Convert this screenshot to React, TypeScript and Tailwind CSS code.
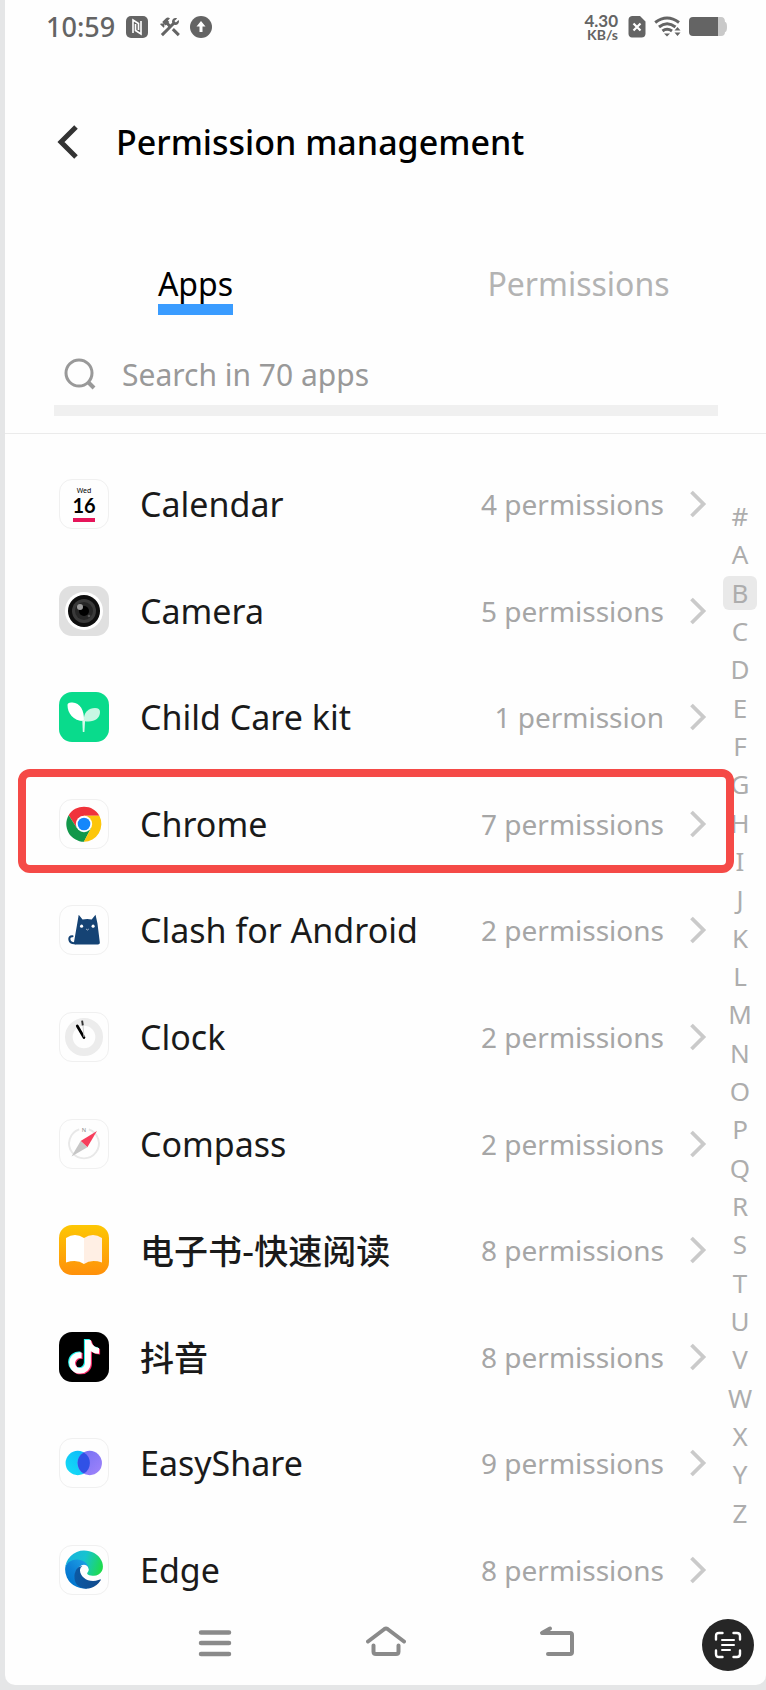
import type { ReactNode } from "react";
import { FaTiktok } from "react-icons/fa";
import { MdConstruction } from "react-icons/md";

function CalendarIcon() {
  return (
    <div className="flex h-full flex-col items-center pt-1.5 text-black">
      <span className="text-[7px] leading-[9px]">Wed</span>
      <span className="font-['Lato'] text-[20px] leading-[20px] font-bold">16</span>
      <span className="mt-[3px] h-1 w-[22px] bg-[#e6155a]" />
    </div>
  );
}

function CameraIcon() {
  return (
    <svg viewBox="0 0 50 50" className="size-full">
      <rect width="50" height="50" fill="#e0e0e0" />
      <circle cx="25" cy="25" r="19" fill="#fff" />
      <circle cx="25" cy="25" r="16" fill="#0e0e0e" />
      <circle cx="25" cy="25" r="12" fill="#3a3a3a" />
      <circle cx="25" cy="25" r="9" fill="#262626" />
      <circle cx="25" cy="25" r="5" fill="#000" />
      <circle cx="21" cy="21" r="3" fill="#9a9a9a" />
      <circle cx="30" cy="30" r="1.3" fill="#555" />
    </svg>
  );
}

function SproutIcon() {
  return (
    <svg viewBox="0 0 50 50" className="size-full">
      <rect width="50" height="50" fill="#09db8c" />
      <path d="M25 29C24 20 30 16 36 16q5 0 5 4c0 7-7 11-16 9z" fill="#c8f7e4" />
      <path d="M25 29C14 29 8.500 21 8.500 13q0-3 5-2.500C21 11 25.500 18 25 29z" fill="#fff" />
      <path d="M23.300 28h2.800l-.7 12h-1.600z" fill="#d9faec" />
    </svg>
  );
}

function ChromeIcon() {
  return (
    <svg viewBox="-25 -25 50 50" className="size-full">
      <path d="M-16 -9.200A18.500 18.500 0 0 1 16 -8.500L0 -8.500 -7.400 4.200Z" fill="#f0333b" />
      <path d="M-16 -9.200A18.500 18.500 0 0 0 0 18.500L7.400 4.200 -7.400 4.200Z" fill="#12974a" />
      <path d="M16 -8.500A18.500 18.500 0 0 1 -.2 18.500L7.400 4.200 0 -8.500Z" fill="#fcc60b" />
      <circle r="8.500" fill="#fff" />
      <circle r="6.600" fill="#1587fb" />
    </svg>
  );
}

function CatIcon() {
  return (
    <svg viewBox="0 0 50 50" className="size-full">
      <path d="M19.500 9l4 5q5-1 9.500 0l4-5 2 9 2.500 20q.2 2-2 2H16q-1.800 0-1.500-2L18 18z" fill="#154374" />
      <path d="M13 31.500c-5-.5-4.500 8 3 7.300" fill="none" stroke="#154374" strokeWidth="2.200" strokeLinecap="round" />
      <circle cx="22.500" cy="21" r="1.600" fill="#fff" />
      <circle cx="34.500" cy="21" r="1.600" fill="#fff" />
      <path d="M27.200 24l1.400 1 1.400-1" fill="none" stroke="#b9c7d6" strokeWidth="1" />
    </svg>
  );
}

function ClockIcon() {
  return (
    <svg viewBox="0 0 50 50" className="size-full">
      <circle cx="25" cy="25" r="15.800" fill="none" stroke="#ececec" strokeWidth="8" />
      <path d="M18 13.500L25 25.500" stroke="#000" strokeWidth="2.800" strokeLinecap="round" />
      <path d="M23 8l.8 5" stroke="#333" strokeWidth="2" />
      <path d="M24 13l1 12" stroke="#ccc" strokeWidth="1" />
    </svg>
  );
}

function CompassIcon() {
  return (
    <svg viewBox="0 0 50 50" className="size-full">
      <path d="M30 9.800A15.500 15.500 0 1 1 20 9.800" fill="none" stroke="#e8e8e8" strokeWidth="2" />
      <text x="25" y="12" fontSize="6" textAnchor="middle" fill="#888">
        N
      </text>
      <path d="M38.500 11.500L21.500 22l7 6.500z" fill="#f73e5c" />
      <path d="M12 38l9.500-16 7 6.500z" fill="#c6c6c6" />
    </svg>
  );
}

function BookIcon() {
  return (
    <svg viewBox="0 0 50 50" className="size-full">
      <defs>
        <linearGradient id="book-bg" x1="0" y1="0" x2="0" y2="1">
          <stop offset="0" stopColor="#fdc704" />
          <stop offset="1" stopColor="#ff900a" />
        </linearGradient>
      </defs>
      <rect width="50" height="50" fill="url(#book-bg)" />
      <path d="M7 13q9-6 18 0v26q-7-5-18-1.500z" fill="#fff" />
      <path d="M43 13q-9-6-18 0v26q7-5 18-1.500z" fill="#ffefe4" />
    </svg>
  );
}

function DouyinIcon() {
  return (
    <svg viewBox="0 0 50 50" className="size-full">
      <rect width="50" height="50" fill="#000" />
      <FaTiktok x="7" y="7" size={34} color="#25f4ee" />
      <FaTiktok x="9.200" y="8.600" size={34} color="#fe2c6d" />
      <FaTiktok x="8.100" y="7.800" size={34} color="#fff" />
    </svg>
  );
}

function EasyShareIcon() {
  return (
    <svg viewBox="0 0 50 50" className="size-full">
      <defs>
        <linearGradient id="share-left" x1="0" y1="1" x2="1" y2="0">
          <stop offset="0" stopColor="#16dff5" />
          <stop offset="1" stopColor="#0bb4fb" />
        </linearGradient>
        <linearGradient id="share-right" x1="0" y1="0" x2="1" y2="1">
          <stop offset="0" stopColor="#706ef2" />
          <stop offset="1" stopColor="#a184fb" />
        </linearGradient>
      </defs>
      <circle cx="18.500" cy="25" r="12.700" fill="url(#share-left)" />
      <circle cx="31" cy="25" r="12.700" fill="url(#share-right)" />
      <path d="M24.750 14a12.700 12.700 0 0 1 0 22 12.700 12.700 0 0 1 0-22z" fill="#3051e6" />
    </svg>
  );
}

function EdgeIcon() {
  return (
    <svg viewBox="0 0 50 50" className="size-full">
      <defs>
        <linearGradient id="edge-dark" x1="63" y1="177" x2="241" y2="177" gradientUnits="userSpaceOnUse">
          <stop offset="0" stopColor="#0c59a4" />
          <stop offset="1" stopColor="#114a8b" />
        </linearGradient>
        <linearGradient id="edge-mid" x1="157" y1="100" x2="46" y2="221" gradientUnits="userSpaceOnUse">
          <stop offset="0" stopColor="#1b9de2" />
          <stop offset=".6" stopColor="#0d7fd6" />
          <stop offset="1" stopColor="#0278cf" />
        </linearGradient>
        <linearGradient id="edge-top" x1="20" y1="60" x2="245" y2="130" gradientUnits="userSpaceOnUse">
          <stop offset="0" stopColor="#18b5dc" />
          <stop offset=".45" stopColor="#16c3d0" />
          <stop offset="1" stopColor="#1fdc4c" />
        </linearGradient>
      </defs>
      <g transform="translate(5.300 4.700) scale(.1540)">
        <path
          fill="url(#edge-mid)"
          d="M105.700 241.400a79.200 79.200 0 0 1-22.700-21.300 80.700 80.700 0 0 1 29.500-120c3.200-1.500 8.500-4.100 15.600-4a32.400 32.400 0 0 1 25.700 13 31.900 31.900 0 0 1 6.300 18.700c0-.2 24.500-79.600-80-79.600-43.900 0-80 41.700-80 78.200a130.200 130.200 0 0 0 12.100 56 128 128 0 0 0 156.400 67 75.500 75.500 0 0 1-62.800-8z"
        />
        <path
          fill="url(#edge-dark)"
          d="M235.700 195.500a94 94 0 0 1-10.600 4.700 101.900 101.900 0 0 1-35.900 6.400c-47.300 0-88.500-32.500-88.500-74.300a31.500 31.500 0 0 1 16.400-27.300c-42.800 1.800-53.800 46.400-53.800 72.500 0 74 68.100 81.400 82.800 81.400 7.900 0 19.800-2.300 27-4.600l1.300-.4a128.300 128.300 0 0 0 66.600-52.800 4 4 0 0 0-5.300-5.600z"
        />
        <path
          fill="url(#edge-top)"
          d="M152.300 148.900c-.8 1-3.300 2.500-3.300 5.700 0 2.600 1.700 5.100 4.700 7.200 14.400 10 41.500 8.700 41.600 8.700a59.600 59.600 0 0 0 30.300-8.300 61.400 61.400 0 0 0 30.400-52.900c.3-22.400-8-37.300-11.300-43.900C223.500 23.900 177.700 0 128 0A128 128 0 0 0 0 126.200c.5-36.500 36.800-66 80-66 3.500 0 23.500.3 42 10 16.300 8.600 24.900 19 30.800 29.200 6.200 10.700 7.300 24.100 7.300 29.500s-2.700 13.300-7.800 20z"
        />
      </g>
    </svg>
  );
}

type AppEntry = {
  name: string;
  count: number;
  icon: ReactNode;
  filled?: boolean;
  chinese?: boolean;
  marked?: boolean;
};

const apps: AppEntry[] = [
  { name: "Calendar", count: 4, icon: <CalendarIcon /> },
  { name: "Camera", count: 5, icon: <CameraIcon />, filled: true },
  { name: "Child Care kit", count: 1, icon: <SproutIcon />, filled: true },
  { name: "Chrome", count: 7, icon: <ChromeIcon />, marked: true },
  { name: "Clash for Android", count: 2, icon: <CatIcon /> },
  { name: "Clock", count: 2, icon: <ClockIcon /> },
  { name: "Compass", count: 2, icon: <CompassIcon /> },
  { name: "电子书-快速阅读", count: 8, icon: <BookIcon />, filled: true, chinese: true },
  { name: "抖音", count: 8, icon: <DouyinIcon />, filled: true, chinese: true },
  { name: "EasyShare", count: 9, icon: <EasyShareIcon /> },
  { name: "Edge", count: 8, icon: <EdgeIcon /> },
];

const letters = "#ABCDEFGHIJKLMNOPQRSTUVWXYZ".split("");

function StatusBar() {
  return (
    <div className="flex h-[54px] items-center justify-between pr-[39px] pl-[41px] text-[#646464]">
      <div className="flex items-center">
        <time className="w-20 text-[27px] leading-8 font-medium">10:59</time>
        <svg viewBox="0 0 22 22" className="size-[22px]">
          <rect width="22" height="22" rx="5" fill="currentColor" />
          <path
            d="M7 17V4l5.500 3.500V14M9.500 8v6.500L15 18V5"
            fill="none"
            stroke="#fff"
            strokeWidth="1.600"
          />
        </svg>
        <MdConstruction className="ml-2.5 size-6" />
        <svg viewBox="0 0 22 22" className="ml-2 size-[22px]">
          <circle cx="11" cy="11" r="11" fill="currentColor" />
          <path d="M11 5l4.500 5.500h-3V16h-3v-5.500h-3z" fill="#fff" />
        </svg>
      </div>
      <div className="flex items-center">
        <div className="flex flex-col items-end font-['Lato'] font-bold">
          <span className="text-[17px] leading-[14px]">4.30</span>
          <span className="text-[14px] leading-[13px]">KB/s</span>
        </div>
        <svg viewBox="0 0 18 22" className="ml-2.5 h-[22px] w-[18px]">
          <path d="M4 0h8l5.500 5.500V18a4 4 0 0 1-4 3.500H4A4 4 0 0 1 .5 18V4A4 4 0 0 1 4 0z" fill="currentColor" />
          <path d="M5.500 7.500l7 7m0-7l-7 7" stroke="#fff" strokeWidth="2.200" />
        </svg>
        <svg viewBox="0 0 27 22" className="ml-2 h-[22px] w-[27px]" fill="none" stroke="currentColor" strokeWidth="3">
          <path d="M1.200 6.500Q13 -2.500 25 6.500" />
          <path d="M5 11q8-6.500 16.500 0" />
          <path d="M8.500 15q4.500-3.500 9.500 0" />
          <path d="M10 17.500h6L13 20.500z" fill="currentColor" stroke="none" />
          <path d="M23.500 11l3 3.500h-6zM23.500 20l3-3.500h-6z" fill="currentColor" stroke="none" />
        </svg>
        <svg viewBox="0 0 38 20" className="ml-2 h-5 w-[38px]">
          <path d="M26 0h6q4 0 4 5 2 0 2 5t-2 5q0 4-4 4h-6z" fill="#c9c9c9" />
          <path d="M4 0h25v19H4a4 4 0 0 1-4-4V4a4 4 0 0 1 4-4z" fill="currentColor" />
        </svg>
      </div>
    </div>
  );
}

function AppRow({ app }: { app: AppEntry }) {
  return (
    <li className="relative flex">
      <a href="#" className="flex flex-1 items-center pr-[7px] pl-[54px]">
        <span
          className={
            app.filled
              ? "size-[50px] shrink-0 overflow-hidden rounded-[13px]"
              : "size-[50px] shrink-0 overflow-hidden rounded-[13px] border border-[#f0f0f0]"
          }
        >
          {app.icon}
        </span>
        <span
          className={
            app.chinese
              ? "ml-[31px] flex-1 font-['Noto_Sans_CJK_SC',sans-serif] text-[34px] leading-10 font-medium text-[#1a1a1a]"
              : "ml-[31px] flex-1 text-[34px] leading-10 text-[#1a1a1a]"
          }
        >
          {app.name}
        </span>
        <span className="text-[28px] leading-9 text-[#a6a6a6]">
          {app.count} {app.count === 1 ? "permission" : "permissions"}
        </span>
        <svg viewBox="0 0 18 28" className="ml-[25px] h-7 w-[18px]" fill="none" stroke="#cacaca" strokeWidth="3.800">
          <path d="M2.500 2l12 12-12 12" />
        </svg>
      </a>
      {app.marked && (
        <span className="pointer-events-none absolute -top-0.5 -right-5 bottom-1 left-[13px] z-10 rounded-xl border-8 border-[#f54a47]" />
      )}
    </li>
  );
}

export default function App() {
  return (
    <div className="min-h-screen bg-[#e5e6e7] pb-1 pl-[5px] font-['Noto_Sans','Noto_Sans_CJK_SC',sans-serif]">
      <div className="relative rounded-b-[10px] bg-[#fefefe]">
        <StatusBar />

        <header className="flex h-44 items-center pl-[51px]">
          <button type="button" aria-label="Back">
            <svg viewBox="0 0 24 36" className="h-9 w-6" fill="none" stroke="#333" strokeWidth="5">
              <path d="M20 3L5 18l15 15" />
            </svg>
          </button>
          <h1 className="ml-9 text-[34px] leading-10 font-medium text-black">Permission management</h1>
        </header>

        <div role="tablist" className="grid grid-cols-2 gap-2 pt-9 pl-[3px] text-[32px] leading-9">
          <button type="button" role="tab" aria-selected="true" className="flex flex-col items-center text-black">
            <span className="flex flex-col gap-0.5">
              Apps
              <span className="h-[11px] bg-[#3a9cff]" />
            </span>
          </button>
          <button type="button" role="tab" aria-selected="false" className="flex flex-col items-center text-[#b3b3b3]">
            Permissions
          </button>
        </div>

        <label className="mt-7 mr-12 ml-[49px] flex h-[73px] items-center border-b-[11px] border-[#f0f0f0] pl-2.5">
          <svg viewBox="0 0 32 32" className="size-8" fill="none" stroke="#999" strokeWidth="3">
            <circle cx="15" cy="15" r="13" />
            <path d="M24 24l6 6" strokeWidth="4" />
          </svg>
          <input
            type="text"
            aria-label="Search apps"
            placeholder="Search in 70 apps"
            className="ml-[26px] h-10 min-w-0 flex-1 bg-transparent text-[30px] outline-none placeholder:text-[#999]"
          />
        </label>

        <div className="mt-[17px] flex items-start border-t border-[#ebebeb] pt-[17px]">
          <ul className="grid h-[1172px] flex-1 auto-rows-fr">
            {apps.map((app) => (
              <AppRow key={app.name} app={app} />
            ))}
          </ul>
          <nav
            aria-label="Alphabet index"
            className="mt-[46px] grid h-[1035px] w-[52px] auto-rows-fr items-center justify-items-center text-[26px] text-[#adadad]"
          >
            {letters.map((letter) => (
              <a
                key={letter}
                href="#"
                className={
                  letter === "B"
                    ? "flex size-[34px] items-center justify-center rounded-md bg-[#e9e9e9] leading-none"
                    : "flex size-[34px] items-center justify-center leading-none"
                }
              >
                {letter}
              </a>
            ))}
          </nav>
        </div>

        <nav aria-label="System navigation" className="flex h-[62px] items-start justify-center gap-[131px]">
          <button type="button" aria-label="Recent apps">
            <svg viewBox="0 0 40 40" className="size-10" stroke="#8a8a8a" strokeWidth="4.500" strokeLinecap="round">
              <path d="M6 9.500h28M6 20h28M6 31h28" />
            </svg>
          </button>
          <button type="button" aria-label="Home">
            <svg
              viewBox="0 0 40 40"
              className="size-10"
              fill="none"
              stroke="#8a8a8a"
              strokeWidth="4"
              strokeLinecap="round"
              strokeLinejoin="round"
            >
              <path d="M2 18.500L18.500 6q1.500-1 3 0L38 18.500" />
              <path d="M7.500 22.500v6q0 2.500 2.500 2.500h20q2.500 0 2.500-2.500v-6" />
            </svg>
          </button>
          <button type="button" aria-label="Return">
            <svg
              viewBox="0 0 40 40"
              className="size-10"
              fill="none"
              stroke="#8a8a8a"
              strokeWidth="4"
              strokeLinecap="round"
              strokeLinejoin="round"
            >
              <path d="M13 5.500L5 10h28q2 0 2 2v17q0 2-2 2H11" />
              <path d="M13 5.500v4H6z" fill="#8a8a8a" stroke="none" />
            </svg>
          </button>
        </nav>

        <button
          type="button"
          aria-label="Scan text"
          className="absolute right-3 bottom-3.5 flex size-[52px] items-center justify-center rounded-full bg-[#262626]"
        >
          <svg viewBox="0 0 28 28" className="size-7" fill="none" stroke="#fff" strokeLinecap="round">
            <path
              d="M2 8.500V5q0-3 3-3h3.500M19.500 2H23q3 0 3 3v3.500M26 19.500V23q0 3-3 3h-3.500M8.500 26H5q-3 0-3-3v-3.500"
              strokeWidth="2.400"
            />
            <path d="M8 9h12M8 14h12M8 19h8" strokeWidth="2" />
          </svg>
        </button>
      </div>
    </div>
  );
}
